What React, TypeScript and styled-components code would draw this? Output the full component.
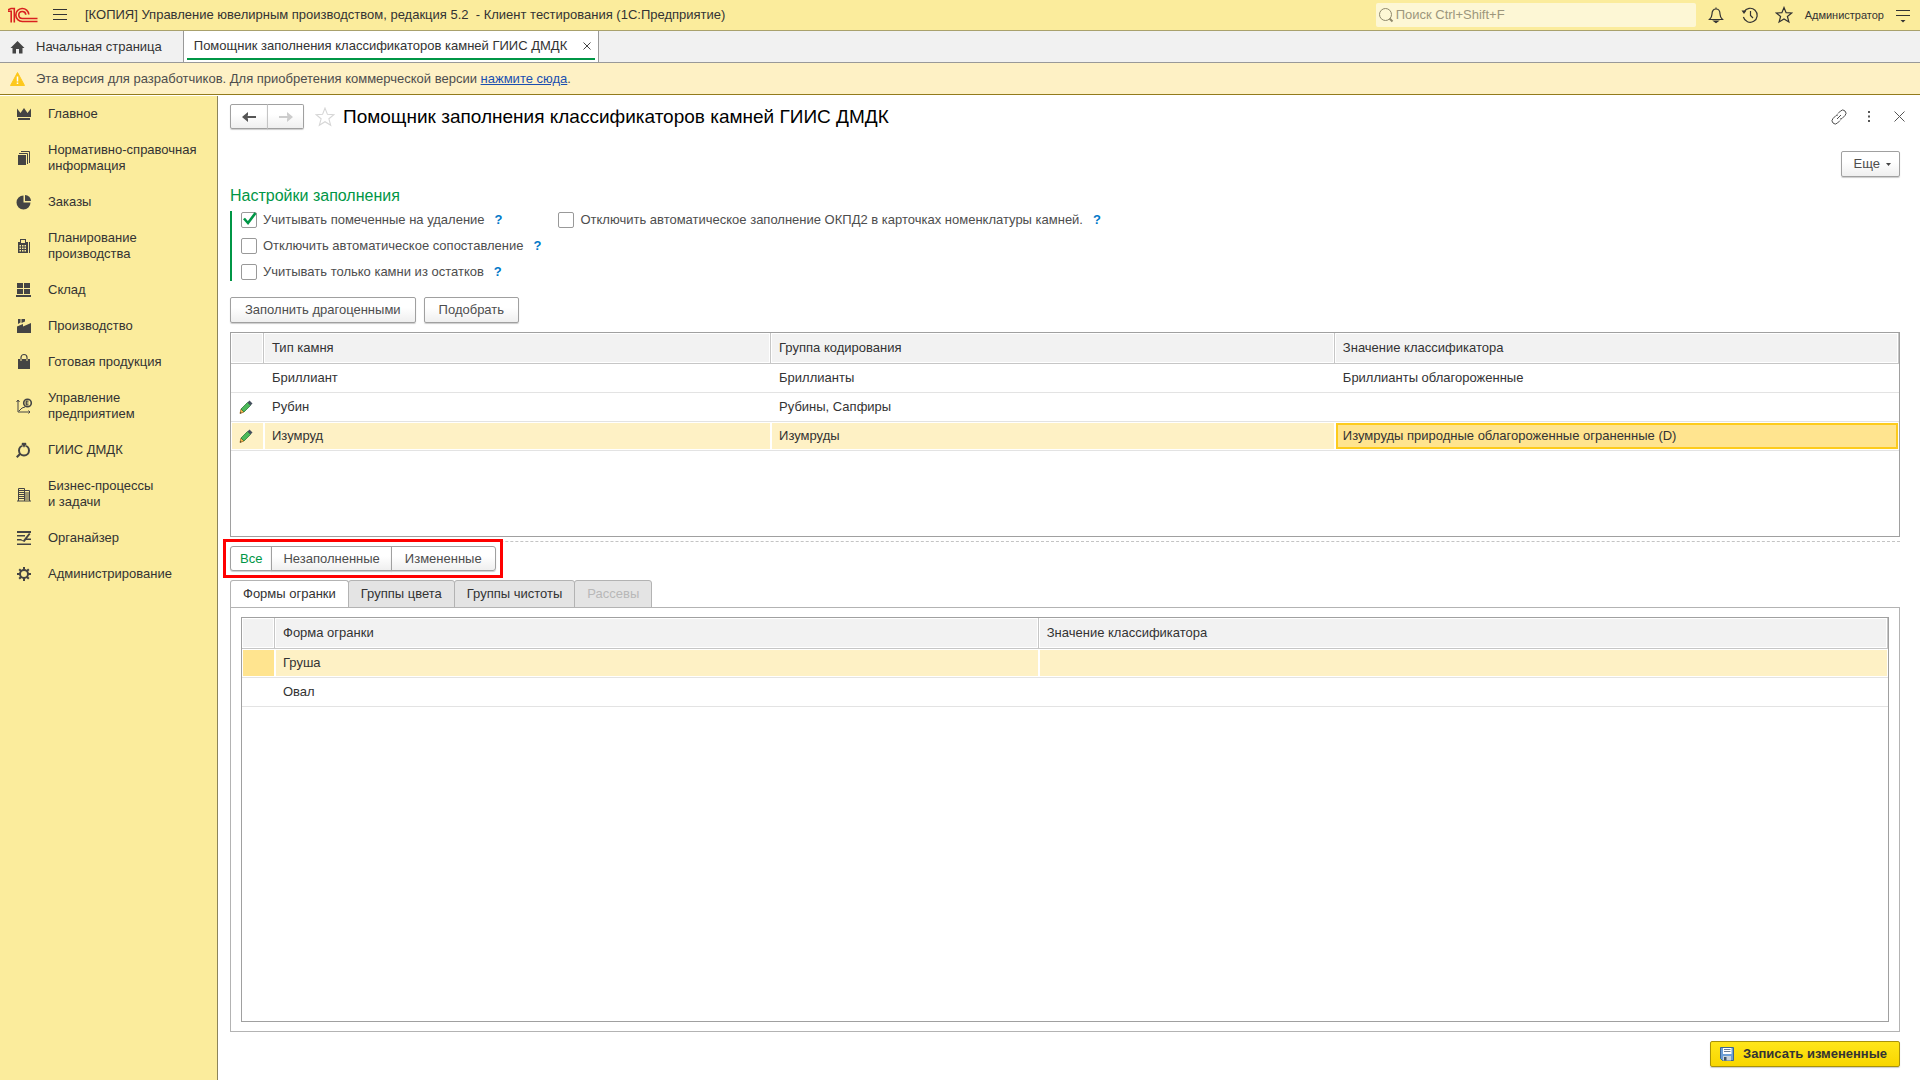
import React, { useState } from 'react';
import styled, { createGlobalStyle, css } from 'styled-components';

const GlobalStyle = createGlobalStyle`
  * { box-sizing: border-box; }
  html, body { margin: 0; padding: 0; }
  body, button, input, table {
    font-family: "Liberation Sans", Arial, sans-serif;
    font-size: 13px;
    line-height: 16px;
    color: #333;
  }
`;

const Page = styled.div`
  display: flex;
  flex-direction: column;
  min-height: 100vh;
  background: #fff;
`;

/* ---------- top bar ---------- */

const TopBar = styled.header`
  display: flex;
  align-items: center;
  height: 31px;
  padding: 0 7px 0 8px;
  background: #fbec9c;
  border-bottom: 1px solid #a9a16c;
`;

const IconButton = styled.button`
  display: inline-flex;
  align-items: center;
  justify-content: center;
  width: 20px;
  height: 20px;
  padding: 0;
  border: 0;
  background: none;
  color: #4d4d4d;
  cursor: pointer;
`;

const Logo = styled.svg`
  margin-right: 12px;
`;

const AppTitle = styled.div`
  flex: 1;
  padding-left: 15px;
  white-space: pre;
`;

const SearchBox = styled.label`
  display: flex;
  align-items: center;
  gap: 2px;
  width: 320px;
  height: 24px;
  margin-right: 10px;
  padding-left: 2px;
  border-radius: 2px;
  background: #fdf7d5;
`;

const SearchInput = styled.input`
  flex: 1;
  min-width: 0;
  padding: 0;
  border: 0;
  outline: 0;
  background: none;
  &::placeholder {
    color: #9c967c;
    opacity: 1;
  }
`;

const TopActions = styled.div`
  display: flex;
  align-items: center;
  gap: 14px;
`;

const UserButton = styled.button`
  margin: 0 9px 0 11px;
  padding: 0;
  border: 0;
  background: none;
  font-size: 11px;
`;

/* ---------- window tabs ---------- */

const WindowTabs = styled.nav`
  display: flex;
  height: 32px;
  background: #f1f1f1;
  border-bottom: 1px solid #999;
`;

const HomeTab = styled.button`
  display: flex;
  align-items: center;
  gap: 11px;
  padding: 0 21px 0 10px;
  border: 0;
  border-right: 1px solid #999;
  background: none;
`;

const OpenTab = styled.div`
  display: flex;
  align-items: flex-start;
  padding: 0 3px;
  border-right: 1px solid #999;
  background: #fff;
`;

const OpenTabInner = styled.div`
  display: flex;
  align-items: center;
  gap: 12px;
  height: 29px;
  padding: 2px 0 0 7px;
  border-bottom: 2px solid #009646;
`;

const CloseTab = styled(IconButton)`
  width: 16px;
  height: 16px;
`;

const Banner = styled.div`
  display: flex;
  align-items: center;
  gap: 11px;
  height: 32px;
  padding: 0 10px;
  background: #fef1c5;
  border-bottom: 1px solid #937b1c;
  color: #4d4d4d;
`;

const BannerLink = styled.a`
  color: #1a4fb0;
`;

/* ---------- sections ---------- */

const Body = styled.div`
  display: flex;
  flex: 1;
`;

const Sidebar = styled.nav`
  flex: none;
  width: 218px;
  margin-top: 1px;
  background: #fbec9c;
  border-right: 1px solid #8c845a;
`;

const SectionButton = styled.button`
  display: flex;
  align-items: center;
  gap: 15px;
  width: 100%;
  padding: 10px 8px 10px 15px;
  border: 0;
  background: none;
  text-align: left;
  white-space: pre-line;
  svg {
    flex: none;
    margin: -1px 0;
    color: #444;
  }
`;

/* ---------- form ---------- */

const Form = styled.main`
  display: flex;
  flex: 1;
  flex-direction: column;
  min-width: 0;
  padding: 9px 20px 13px 12px;
`;

const FormHeader = styled.div`
  display: flex;
  align-items: center;
  height: 25px;
`;

const buttonFace = css`
  border: 1px solid #a0a0a0;
  background: linear-gradient(#fff 40%, #efefef);
  box-shadow: 0 1px 1px #ccc;
  color: #4d4d4d;
`;

const History = styled.div`
  display: flex;
  margin-right: 11px;
`;

const HistoryButton = styled.button`
  ${buttonFace}
  display: flex;
  align-items: center;
  justify-content: center;
  width: 38px;
  height: 25px;
  padding: 0;
  border-radius: 2px 0 0 2px;
  & + & {
    width: 37px;
    margin-left: -1px;
    border-left-color: #c4c4c4;
    border-radius: 0 2px 2px 0;
  }
`;

const Title = styled.h1`
  flex: 1;
  margin: 0 0 0 8px;
  color: #000;
  font-size: 19px;
  font-weight: 400;
  line-height: 24px;
`;

const HeaderTools = styled.div`
  display: flex;
  gap: 10px;
  margin-right: -9px;
`;

const MoreRow = styled.div`
  display: flex;
  justify-content: flex-end;
  margin-top: 22px;
`;

const Button = styled.button`
  ${buttonFace}
  display: inline-flex;
  align-items: center;
  justify-content: center;
  gap: 6px;
  height: 26px;
  padding: 0 14px;
  border-radius: 2px;
`;

const MoreButton = styled(Button)`
  padding: 0 8px 0 12px;
`;

const GroupTitle = styled.h2`
  margin: 9px 0 5px;
  color: #009646;
  font-size: 16px;
  font-weight: 400;
  line-height: 20px;
`;

const Settings = styled.div`
  display: flex;
  gap: 17px;
  padding-left: 9px;
  border-left: 2px solid #009646;
`;

const SettingsColumn = styled.div`
  display: flex;
  flex-direction: column;
  gap: 10px;
  padding: 1px 0;
`;

const Option = styled.div`
  display: flex;
  align-items: center;
  height: 16px;
`;

const OptionLabel = styled.label`
  display: flex;
  align-items: center;
  gap: 6px;
  color: #4d4d4d;
`;

const CheckWrap = styled.span`
  position: relative;
  display: flex;
  width: 16px;
  height: 16px;
`;

const CheckInput = styled.input`
  appearance: none;
  width: 16px;
  height: 16px;
  margin: 0;
  border: 1px solid #999;
  border-radius: 2px;
  background: #fff;
`;

const CheckMark = styled.svg`
  position: absolute;
  left: 1px;
  top: 0;
  pointer-events: none;
`;

const Help = styled.button`
  margin-left: 10px;
  padding: 0;
  border: 0;
  background: none;
  color: #0078c8;
  font-weight: 700;
`;

const CommandBar = styled.div`
  display: flex;
  gap: 8px;
  margin: 16px 0 9px;
`;

/* ---------- tables ---------- */

const TableFrame = styled.div<{ $grow?: boolean }>`
  ${(p) => (p.$grow ? 'flex: 1;' : 'min-height: 205px;')}
  border: 1px solid #a0a0a0;
  background: #fff;
`;

const Table = styled.table`
  width: 100%;
  table-layout: fixed;
  border-collapse: separate;
  border-spacing: 0;
`;

const MarkCol = styled.col`
  width: 33px;
`;

const ShareCol = styled.col<{ $share?: number }>`
  ${(p) => p.$share && `width: ${p.$share}%;`}
`;

const Th = styled.th`
  height: 31px;
  padding: 0 8px;
  border-right: 1px solid #c6c6c6;
  border-bottom: 1px solid #c6c6c6;
  background: #f2f2f2;
  box-shadow: inset 0 0 0 1px #fff;
  font-weight: 400;
  text-align: left;
`;

const Td = styled.td<{ $tone?: 'row' | 'mark' | 'cell' }>`
  height: 29px;
  padding: 0 8px;
  border-bottom: 1px solid #e3e3e3;
  ${(p) =>
    p.$tone &&
    css`
      background: ${p.$tone === 'row' ? '#fef1c5' : '#ffe48f'};
      box-shadow: inset 0 0 0 1px #fff;
    `}
  ${(p) =>
    p.$tone === 'cell' &&
    css`
      box-shadow: inset 0 0 0 1px #fff, inset 0 0 0 3px #fdcb1c;
    `}
`;

const MarkCell = styled(Td)`
  padding: 0 0 0 7px;
  svg { display: block; }
`;

/* ---------- filter and tabs ---------- */

const Splitter = styled.hr`
  width: 100%;
  margin: 4px 0;
  border: 0;
  border-top: 1px dashed #c4c4c4;
`;

const FilterGroup = styled.div`
  position: relative;
  display: flex;
  align-self: flex-start;
`;

const Highlight = styled.span`
  position: absolute;
  inset: -7px;
  border: 3px solid #f00;
  pointer-events: none;
`;

const FilterButton = styled.button<{ $active?: boolean }>`
  ${buttonFace}
  height: 25px;
  padding: 0 11px;
  margin-left: -1px;
  &:first-of-type {
    margin-left: 0;
    padding: 0 9px;
    border-radius: 3px 0 0 3px;
  }
  &:last-of-type {
    padding: 0 13px;
    border-radius: 0 3px 3px 0;
  }
  ${(p) => p.$active && 'background: #fff; color: #009646;'}
`;

const TabList = styled.div`
  display: flex;
  margin-top: 9px;
`;

const Tab = styled.button<{ $active?: boolean }>`
  height: 28px;
  padding: 0 12px;
  margin: 0 0 -1px -1px;
  border: 1px solid #b3b3b3;
  border-radius: 3px 3px 0 0;
  background: #e4e4e4;
  color: #333;
  &:first-child { margin-left: 0; }
  &:disabled { color: #b8b8b8; }
  ${(p) => p.$active && 'background: #fff; border-bottom-color: #fff;'}
`;

const TabPanel = styled.section`
  display: flex;
  flex: 1;
  flex-direction: column;
  padding: 9px 10px;
  border: 1px solid #b3b3b3;
`;

const Footer = styled.footer`
  display: flex;
  justify-content: flex-end;
  margin-top: 9px;
`;

const SaveButton = styled(Button)`
  gap: 8px;
  padding: 0 12px 0 8px;
  border-color: #a8920a;
  background: linear-gradient(#ffe61a, #f8d600);
  color: #333;
  font-weight: 700;
`;

/* ---------- drawings ---------- */

const line = { fill: 'none', stroke: 'currentColor', strokeWidth: 1.2 } as const;

const Pencil = () => (
  <svg width="16" height="16" viewBox="0 0 16 16" aria-hidden="true">
    <path d="M2 14.500 3 10l3 3z" fill="#f6b94d" stroke="#9a6b25" strokeWidth=".8" />
    <path d="M3 10 9.500 3.500l3 3L6 13z" fill="#4cb95a" stroke="#2d7a3a" strokeWidth=".8" />
    <path d="m9.500 3.500 2-2L14.500 4.500l-2 2z" fill="#45505e" />
    <path d="m2 14.500.4-1.600 1.200 1.200z" fill="#333" />
  </svg>
);

const sectionIcons: Record<string, React.ReactNode> = {
  crown: <path d="M2 3.500 5.500 8 9 3l3.500 5L16 3.500V12H2zM3 13h12v2H3z" />,
  docs: (
    <>
      <path d="M3 6h8v10H3z" />
      <path d="M4 4.500h8.500V15M6 2.500h8.500V14" {...line} strokeWidth={1} />
    </>
  ),
  pie: (
    <>
      <path d="M8.500 2.500v7h7a7 7 0 1 1-7-7z" />
      <path d="M10 2a6 6 0 0 1 6 6h-6z" />
    </>
  ),
  register: (
    <path
      fillRule="evenodd"
      d="M5 2h6v3h2v11H3V5h2zm1 1v3h4V3zM4.500 8v1.500H6V8zM7 8v1.500h1.500V8zm2.500 0v1.500H11V8zm-5 2.500V12H6v-1.500zm2.500 0V12h1.500v-1.500zm2.500 0V12H11v-1.500zm-5 2.500v1.500H6V13zM7 13v1.500h1.500V13zm2.500 0v1.500H11V13zM14 5h1v11h-1z"
    />
  ),
  boxes: <path d="M2 2h6v5H2zM9 2h6v5H9zM2 8h6v5H2zM9 8h6v5H9zM1 14h15v2H1z" />,
  factory: <path d="M2 16V9.500L8 7v2.500L16 6v10zM3 2h2.500v3.500L3 7zM6.500 2H10v2.500L6.500 6z" />,
  bag: (
    <>
      <path d="M3 6h12v10H3z" />
      <path d="M6 6V4.500a3 3 0 0 1 6 0V6" {...line} />
      <path d="M6 6v2M12 6v2" stroke="#fbec9c" />
    </>
  ),
  trend: (
    <>
      <path d="M3 3v12h12M1.500 5 3 3l1.500 2M13.500 13.500l1.500 1.500-1.500 1.500M4 14l3-3 3-1" {...line} strokeWidth={1} />
      <circle cx="12.500" cy="6" r="3.800" {...line} strokeWidth={1.600} />
      <path d="M11.200 4v4M11 4.200h2.500M11 7.800h2.500M10.500 6h3" {...line} />
    </>
  ),
  gem: (
    <>
      <circle cx="9" cy="9.500" r="5" {...line} strokeWidth={2} />
      <path d="M6 3 7.500 1.500h3L12 3 9 7z" stroke="#fbec9c" strokeWidth=".6" />
      <path d="M1 15.500 4.500 12 6 13.500 2.500 17z" />
    </>
  ),
  buildings: (
    <path
      d="M3.500 16V3.500h6V16M3 5.500h6M3 7.500h6M3 9.500h6M3 11.500h6M3 13.500h6M9.500 5.500h5V16M10 8h4M10 10h4M10 12h4M10 14h4M2 16h14"
      {...line}
      strokeWidth={1}
    />
  ),
  planner: (
    <path d="M2 2h14v2H2zM2 6h8v1.500H2zM2 10h4l2 1.500L14 4l1.500 1L12 9.500h4V11h-5l-1.500 2L6 11.500H2zM2 14.500h14V16H2z" />
  ),
  gear: (
    <>
      <circle cx="9" cy="9" r="4" {...line} strokeWidth={2} />
      <path
        d="M9 2v3M9 13v3M2 9h3M13 9h3M4.200 4.200 6 6M12 12l1.800 1.800M4.200 13.800 6 12M12 6l1.800-1.800"
        {...line}
        strokeWidth={2}
      />
    </>
  ),
};

const SectionIcon = ({ name }: { name: string }) => (
  <svg width="18" height="18" viewBox="0 0 18 18" fill="currentColor" aria-hidden="true">
    {sectionIcons[name]}
  </svg>
);

const sections = [
  ['crown', 'Главное'],
  ['docs', 'Нормативно-справочная\nинформация'],
  ['pie', 'Заказы'],
  ['register', 'Планирование\nпроизводства'],
  ['boxes', 'Склад'],
  ['factory', 'Производство'],
  ['bag', 'Готовая продукция'],
  ['trend', 'Управление\nпредприятием'],
  ['gem', 'ГИИС ДМДК'],
  ['buildings', 'Бизнес-процессы\nи задачи'],
  ['planner', 'Органайзер'],
  ['gear', 'Администрирование'],
];

const stones = [
  { edited: false, type: 'Бриллиант', group: 'Бриллианты', value: 'Бриллианты облагороженные' },
  { edited: true, type: 'Рубин', group: 'Рубины, Сапфиры', value: '' },
  { edited: true, type: 'Изумруд', group: 'Изумруды', value: 'Изумруды природные облагороженные ограненные (D)' },
];

const Check = ({ id, label, initial = false }: { id: string; label: string; initial?: boolean }) => {
  const [on, setOn] = useState(initial);
  return (
    <Option>
      <OptionLabel htmlFor={id}>
        <CheckWrap>
          <CheckInput id={id} type="checkbox" checked={on} onChange={() => setOn(!on)} />
          {on && (
            <CheckMark width="16" height="14" viewBox="0 0 16 14" aria-hidden="true">
              <path d="M2 6.500 6 11 13.500 1" fill="none" stroke="#009646" strokeWidth="2.600" />
            </CheckMark>
          )}
        </CheckWrap>
        {label}
      </OptionLabel>
      <Help type="button">?</Help>
    </Option>
  );
};

export default function App() {
  const [filter, setFilter] = useState('Все');
  const [tab, setTab] = useState('Формы огранки');

  return (
    <Page>
      <GlobalStyle />
      <TopBar>
        <Logo width="30" height="16" viewBox="0 0 30 16" fill="none" stroke="#d9201f" strokeWidth="1.600" aria-label="1С" role="img">
          <path d="M0 4.300h3.200V15.500M0 2.800 3 1.500h3.300V15.500" />
          <path d="M20.800 7.500a6.500 6.500 0 1 0-6.500 7H29.500" />
          <path d="M17.800 7.800a3.500 3.500 0 1 0-3.500 3.700H29.500" />
        </Logo>
        <IconButton aria-label="Меню">
          <svg width="14" height="12" viewBox="0 0 14 12" stroke="#333" strokeWidth="1">
            <path d="M0 .5h14M0 5.500h14M0 10.500h14" />
          </svg>
        </IconButton>
        <AppTitle>{'[КОПИЯ] Управление ювелирным производством, редакция 5.2  - Клиент тестирования (1С:Предприятие)'}</AppTitle>
        <SearchBox>
          <svg width="16" height="16" viewBox="0 0 16 16" fill="none" stroke="#8f896c" aria-hidden="true">
            <circle cx="7.500" cy="7.500" r="6" strokeWidth="1" />
            <path d="m11.500 11.500 3 3" strokeWidth="2" />
          </svg>
          <SearchInput type="search" aria-label="Поиск" placeholder="Поиск Ctrl+Shift+F" />
        </SearchBox>
        <TopActions>
          <IconButton aria-label="Оповещения">
            <svg width="16" height="18" viewBox="0 0 16 18" fill="none" stroke="#333" strokeWidth="1.200">
              <path d="M1.500 13.500h13c-1.500-1.500-2.500-3-2.500-5.500C12 5 10.500 3 8 3S4 5 4 8c0 2.500-1 4-2.500 5.500zM8 3V1.500" />
              <path d="M6 15h4l-2 1.500z" fill="#333" />
            </svg>
          </IconButton>
          <IconButton aria-label="История">
            <svg width="18" height="18" viewBox="0 0 18 18" fill="none" stroke="#333" strokeWidth="1.200">
              <path d="M3 6a7 7 0 1 1-.6 5M9.500 5v4.500l2.500 2.500" />
              <path d="M.5 4.500h5L3 8z" fill="#333" stroke="none" />
            </svg>
          </IconButton>
          <IconButton aria-label="Избранное">
            <svg width="18" height="18" viewBox="0 0 18 18" fill="none" stroke="#333" strokeWidth="1.200">
              <path d="m9 1.500 2.100 5.200 5.600.3-4.300 3.500 1.500 5.500L9 13l-4.900 3 1.500-5.500L1.300 7l5.600-.3z" />
            </svg>
          </IconButton>
        </TopActions>
        <UserButton>Администратор</UserButton>
        <IconButton aria-label="Настройки">
          <svg width="16" height="16" viewBox="0 0 16 16" stroke="#333">
            <path d="M1 3.500h14M1 8.500h14" />
            <path d="M5.500 13h5L8 15.500z" fill="#333" stroke="none" />
          </svg>
        </IconButton>
      </TopBar>

      <WindowTabs>
        <HomeTab>
          <svg width="15" height="14" viewBox="0 0 15 14" fill="#444" aria-hidden="true">
            <path d="M7.500 1 14.500 8H12.500v5.500H9V9H6v4.500H2.500V8H.5z" />
          </svg>
          Начальная страница
        </HomeTab>
        <OpenTab>
          <OpenTabInner>
            Помощник заполнения классификаторов камней ГИИС ДМДК
            <CloseTab aria-label="Закрыть вкладку">
              <svg width="8" height="8" viewBox="0 0 8 8" stroke="#444" strokeWidth="1">
                <path d="m.5.5 7 7M7.500.5l-7 7" />
              </svg>
            </CloseTab>
          </OpenTabInner>
        </OpenTab>
      </WindowTabs>

      <Banner>
        <svg width="15" height="14" viewBox="0 0 15 14" aria-hidden="true">
          <path d="M7.500.5 14.500 13.500H.5z" fill="#fdc81c" stroke="#fdc81c" strokeLinejoin="round" />
          <path d="M7.500 4.500v5M7.500 10.500v1.500" stroke="#fff" strokeWidth="1.500" />
        </svg>
        <span>
          Эта версия для разработчиков. Для приобретения коммерческой версии <BannerLink href="#buy">нажмите сюда</BannerLink>.
        </span>
      </Banner>

      <Body>
        <Sidebar>
          {sections.map(([icon, label]) => (
            <SectionButton key={icon}>
              <SectionIcon name={icon} />
              {label}
            </SectionButton>
          ))}
        </Sidebar>

        <Form>
          <FormHeader>
            <History>
              <HistoryButton aria-label="Назад">
                <svg width="14" height="10" viewBox="0 0 14 10" fill="#555"><path d="M0 5l6-5v3.500L5 4h9v2H5l1 .5V10z" /></svg>
              </HistoryButton>
              <HistoryButton aria-label="Вперед">
                <svg width="14" height="10" viewBox="0 0 14 10" fill="#ccc"><path d="M14 5 8 0v3.500L9 4H0v2h9l-1 .5V10z" /></svg>
              </HistoryButton>
            </History>
            <IconButton aria-label="Добавить в избранное">
              <svg width="20" height="20" viewBox="0 0 18 18" fill="none" stroke="#d6d6d6">
                <path d="m9 1 2.200 5.600 5.800.3-4.500 3.700 1.600 5.900L9 13.200l-5.100 3.300 1.600-5.900L1 6.900l5.800-.3z" />
              </svg>
            </IconButton>
            <Title>Помощник заполнения классификаторов камней ГИИС ДМДК</Title>
            <HeaderTools>
              <IconButton aria-label="Получить ссылку">
                <svg width="16" height="16" viewBox="0 0 16 16" {...line} strokeWidth={1}>
                  <path d="M7 4.500 9.500 2a3 3 0 0 1 4.500 4.500L11 9.500a2.800 2.800 0 0 1-2 .5M9 11.500 6.500 14A3 3 0 0 1 2 9.500l3-3A2.800 2.800 0 0 1 7 6M6 10l4-4" />
                </svg>
              </IconButton>
              <IconButton aria-label="Дополнительно">
                <svg width="4" height="12" viewBox="0 0 4 12" fill="#555"><path d="M1 0h2v2H1zM1 4.500h2v2H1zM1 9h2v2H1z" /></svg>
              </IconButton>
              <IconButton aria-label="Закрыть">
                <svg width="11" height="11" viewBox="0 0 11 11" stroke="#555"><path d="m.5.5 10 10M10.500.5l-10 10" /></svg>
              </IconButton>
            </HeaderTools>
          </FormHeader>

          <MoreRow>
            <MoreButton>
              Еще
              <svg width="5" height="3" viewBox="0 0 5 3" fill="#444" aria-hidden="true"><path d="M0 0h5L2.500 3z" /></svg>
            </MoreButton>
          </MoreRow>

          <GroupTitle>Настройки заполнения</GroupTitle>
          <Settings>
            <SettingsColumn>
              <Check id="with-deleted" label="Учитывать помеченные на удаление" initial />
              <Check id="no-auto-match" label="Отключить автоматическое сопоставление" />
              <Check id="only-stock" label="Учитывать только камни из остатков" />
            </SettingsColumn>
            <SettingsColumn>
              <Check id="no-okpd2" label="Отключить автоматическое заполнение ОКПД2 в карточках номенклатуры камней." />
            </SettingsColumn>
          </Settings>

          <CommandBar>
            <Button>Заполнить драгоценными</Button>
            <Button>Подобрать</Button>
          </CommandBar>

          <TableFrame>
            <Table>
              <colgroup>
                <MarkCol />
                <ShareCol $share={30.4} />
                <ShareCol $share={33.8} />
                <ShareCol />
              </colgroup>
              <thead>
                <tr>
                  <Th aria-label="Изменено" />
                  <Th>Тип камня</Th>
                  <Th>Группа кодирования</Th>
                  <Th>Значение классификатора</Th>
                </tr>
              </thead>
              <tbody>
                {stones.map((s, i) => {
                  const tone = i === 2 ? 'row' : undefined;
                  return (
                    <tr key={s.type}>
                      <MarkCell $tone={tone}>{s.edited && <Pencil />}</MarkCell>
                      <Td $tone={tone}>{s.type}</Td>
                      <Td $tone={tone}>{s.group}</Td>
                      <Td $tone={tone && 'cell'}>{s.value}</Td>
                    </tr>
                  );
                })}
              </tbody>
            </Table>
          </TableFrame>

          <Splitter />

          <FilterGroup>
            {['Все', 'Незаполненные', 'Измененные'].map((f) => (
              <FilterButton key={f} $active={f === filter} onClick={() => setFilter(f)}>
                {f}
              </FilterButton>
            ))}
            <Highlight />
          </FilterGroup>

          <TabList role="tablist">
            {['Формы огранки', 'Группы цвета', 'Группы чистоты', 'Рассевы'].map((t) => (
              <Tab
                key={t}
                role="tab"
                aria-selected={t === tab}
                $active={t === tab}
                disabled={t === 'Рассевы'}
                onClick={() => setTab(t)}
              >
                {t}
              </Tab>
            ))}
          </TabList>
          <TabPanel role="tabpanel">
            <TableFrame $grow>
              <Table>
                <colgroup>
                  <MarkCol />
                  <ShareCol $share={46.4} />
                  <ShareCol />
                </colgroup>
                <thead>
                  <tr>
                    <Th aria-label="Изменено" />
                    <Th>Форма огранки</Th>
                    <Th>Значение классификатора</Th>
                  </tr>
                </thead>
                <tbody>
                  <tr>
                    <MarkCell $tone="mark" />
                    <Td $tone="row">Груша</Td>
                    <Td $tone="row" />
                  </tr>
                  <tr>
                    <MarkCell />
                    <Td>Овал</Td>
                    <Td />
                  </tr>
                </tbody>
              </Table>
            </TableFrame>
          </TabPanel>

          <Footer>
            <SaveButton>
              <svg width="16" height="16" viewBox="0 0 16 16" aria-hidden="true">
                <path d="M1.500 1.500h13v13h-11l-2-2z" fill="#6d9fd6" stroke="#3c6594" />
                <path d="M4 2h8.500v6H4z" fill="#fff" />
                <path d="M5 3.500h6.500M5 5.500h6.500" stroke="#6b7f96" />
                <path d="M4 10h8v4.500H4z" fill="#c9d3dc" />
                <path d="M5 11h2.500v3.500H5z" fill="#3f5468" />
              </svg>
              Записать измененные
            </SaveButton>
          </Footer>
        </Form>
      </Body>
    </Page>
  );
}
